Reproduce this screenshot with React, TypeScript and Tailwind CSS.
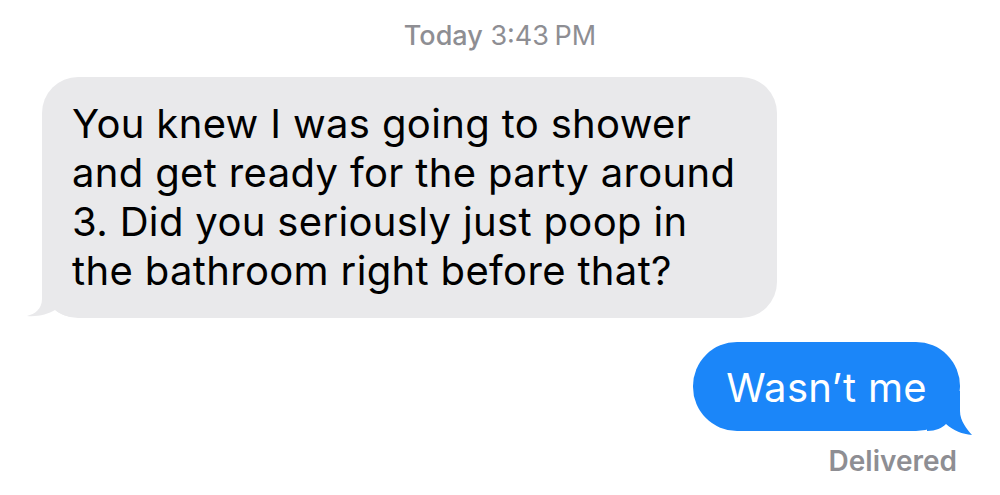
const lines = [
  "You knew I was going to shower",
  "and get ready for the party around",
  "3. Did you seriously just poop in",
  "the bathroom right before that?",
];

const App = () => {
  return (
    <div
      className="w-full h-[495px] bg-white overflow-hidden flex flex-col"
      style={{ fontFamily: "Inter, 'Liberation Sans', sans-serif" }}
    >
      {/* timestamp */}
      <div className="pt-[20px] text-center text-[27px] leading-[32px] text-[#8e8e93]">
        <span className="font-medium">Today</span> 3:43<span className="ml-[-2px]"> </span>PM
      </div>

      {/* incoming message */}
      <div className="mt-[25px] pl-[42px] flex">
        <div className="relative w-[735px] bg-[#e9e9eb] rounded-[36px] pl-[30px] pt-[22px] pb-[23px] text-black text-[40px] leading-[49px] tracking-[0.35px]">
          {lines.map((line, i) => (
            <div key={i} className="whitespace-nowrap relative z-10">
              {line}
            </div>
          ))}
          <svg
            className="absolute left-[-16px] bottom-0"
            width="60"
            height="41"
            viewBox="0 0 60 41"
          >
            <path
              d="M16 2 L16 22 C16 32 9 37 1 39 C12 40 22 37 29 33 C34 37 40 40 49 40 L49 2 Z"
              fill="#e9e9eb"
            />
          </svg>
        </div>
      </div>

      {/* outgoing message */}
      <div className="mt-[24px] pr-[40px] flex justify-end">
        <div className="relative bg-[#1b86f9] rounded-[44px] pl-[33px] pr-[33px] pt-[21px] pb-[19px] text-white text-[40px] leading-[49px] tracking-[0.35px]">
          <span className="relative z-10 whitespace-nowrap">Wasn’t me</span>
          <svg
            className="absolute right-[-16px] bottom-[-4px]"
            width="60"
            height="44"
            viewBox="0 0 60 44"
          >
            <path
              d="M44 0 L44 20 C44 30 51 38 56 44 C46 43 38 40 30 33 C26 37 20 40 11 40 L11 0 Z"
              fill="#1b86f9"
            />
          </svg>
        </div>
      </div>

      {/* receipt */}
      <div className="mt-[14px] pr-[43px] text-right text-[28px] leading-[32px] font-semibold text-[#8e8e93]">
        Delivered
      </div>
    </div>
  );
};

export default App;
